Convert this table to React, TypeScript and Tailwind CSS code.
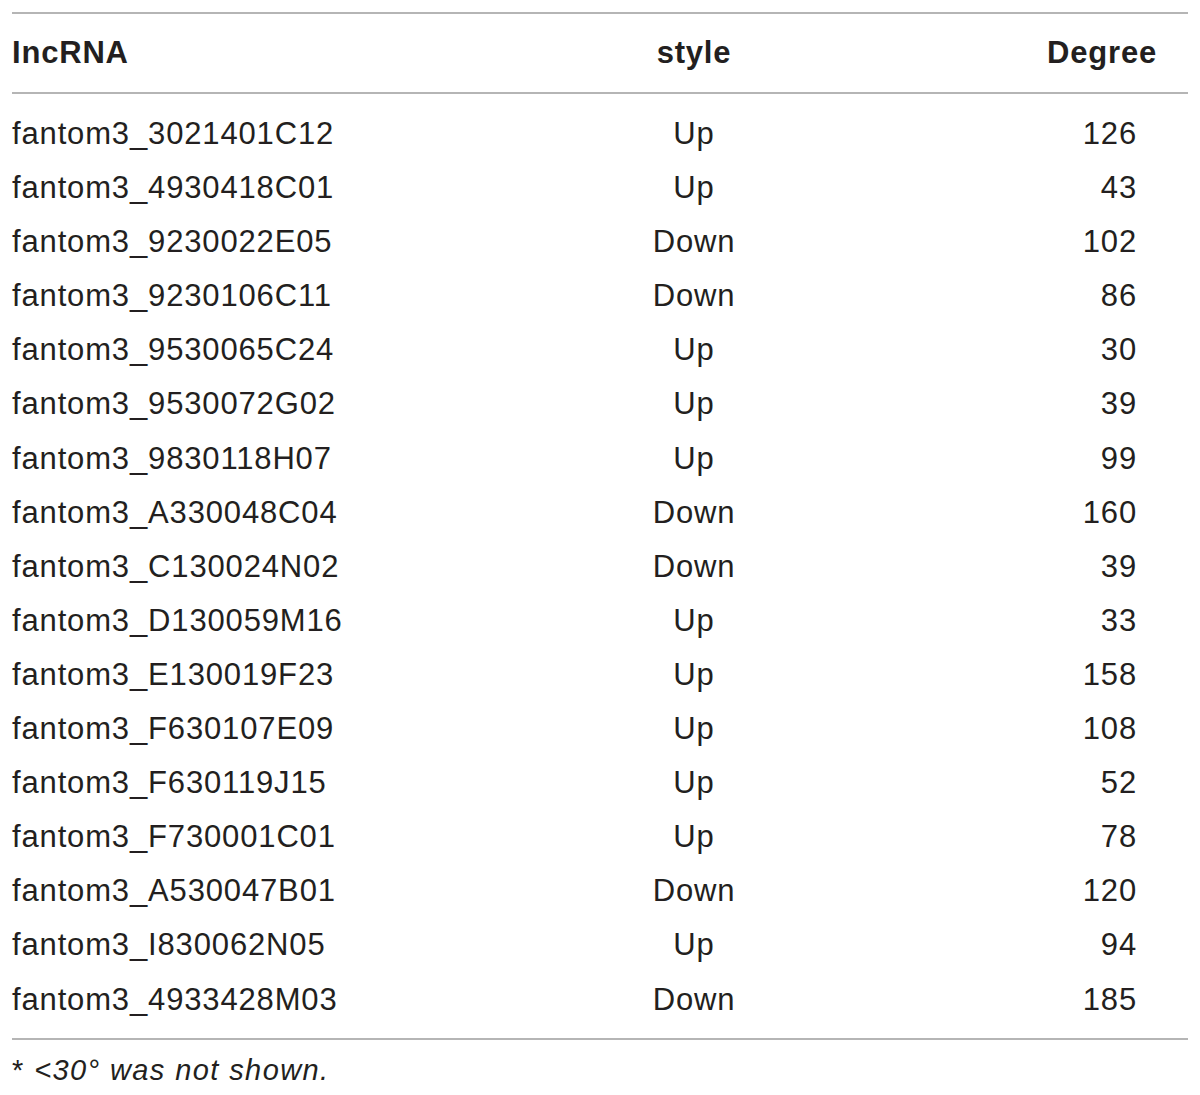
import React from "react";

const rows: [string, string, string][] = [
  ["fantom3_3021401C12", "Up", "126"],
  ["fantom3_4930418C01", "Up", "43"],
  ["fantom3_9230022E05", "Down", "102"],
  ["fantom3_9230106C11", "Down", "86"],
  ["fantom3_9530065C24", "Up", "30"],
  ["fantom3_9530072G02", "Up", "39"],
  ["fantom3_9830118H07", "Up", "99"],
  ["fantom3_A330048C04", "Down", "160"],
  ["fantom3_C130024N02", "Down", "39"],
  ["fantom3_D130059M16", "Up", "33"],
  ["fantom3_E130019F23", "Up", "158"],
  ["fantom3_F630107E09", "Up", "108"],
  ["fantom3_F630119J15", "Up", "52"],
  ["fantom3_F730001C01", "Up", "78"],
  ["fantom3_A530047B01", "Down", "120"],
  ["fantom3_I830062N05", "Up", "94"],
  ["fantom3_4933428M03", "Down", "185"],
];

export default function App() {
  return (
    <div
      className="w-[1200px] h-[1095px] bg-white text-[#231f20] pt-[12px] px-[12px]"
      style={{ fontFamily: '"Liberation Sans", Arial, sans-serif' }}
    >
      <div className="h-[2px] bg-[#b5b5b5]" />
      <div className="grid grid-cols-[564px_236px_1fr] pt-[12px] pb-[12px] text-[31px] leading-[54px] font-bold tracking-[0.8px]">
        <div>IncRNA</div>
        <div className="text-center">style</div>
        <div className="text-right pr-[31px]">Degree</div>
      </div>
      <div className="h-[2px] bg-[#b5b5b5]" />
      <div className="pt-[13px] pb-[11px] text-[31px] leading-[54.1px] tracking-[0.85px]">
        {rows.map((r) => (
          <div key={r[0]} className="grid grid-cols-[564px_236px_1fr]">
            <div>{r[0]}</div>
            <div className="text-center">{r[1]}</div>
            <div className="text-right pr-[51px]">{r[2]}</div>
          </div>
        ))}
      </div>
      <div className="h-[2px] bg-[#b5b5b5]" />
      <div className="text-[29px] leading-[40px] pt-[10px] tracking-[1.4px]">
        <span>* </span>
        <span className="italic">&lt;30° was not shown.</span>
      </div>
    </div>
  );
}
